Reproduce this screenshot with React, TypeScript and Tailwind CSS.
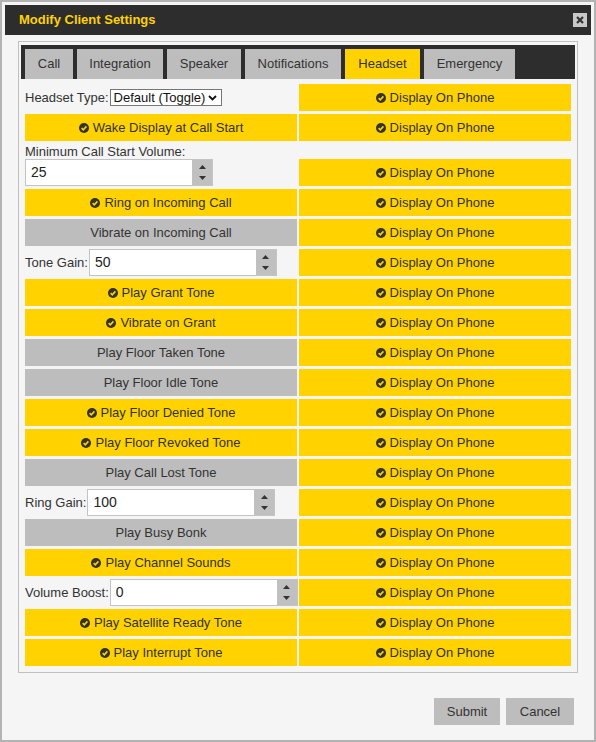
import React from "react";

const TABS = [
    { label: "Call", w: "w-[48px]" },
    { label: "Integration", w: "w-[86px]" },
    { label: "Speaker", w: "w-[74px]" },
    { label: "Notifications", w: "w-[96px]" },
    { label: "Headset", w: "w-[75px]", active: true },
    { label: "Emergency", w: "w-[91px]" },
];

type Row =
    | { kind: "toggle"; label: string; on: boolean }
    | { kind: "select"; label: string; value: string }
    | { kind: "number"; label: string; value: string }
    | { kind: "stacked"; label: string; value: string };

const ROWS: Row[] = [
    { kind: "select", label: "Headset Type:", value: "Default (Toggle)" },
    { kind: "toggle", label: "Wake Display at Call Start", on: true },
    { kind: "stacked", label: "Minimum Call Start Volume:", value: "25" },
    { kind: "toggle", label: "Ring on Incoming Call", on: true },
    { kind: "toggle", label: "Vibrate on Incoming Call", on: false },
    { kind: "number", label: "Tone Gain:", value: "50" },
    { kind: "toggle", label: "Play Grant Tone", on: true },
    { kind: "toggle", label: "Vibrate on Grant", on: true },
    { kind: "toggle", label: "Play Floor Taken Tone", on: false },
    { kind: "toggle", label: "Play Floor Idle Tone", on: false },
    { kind: "toggle", label: "Play Floor Denied Tone", on: true },
    { kind: "toggle", label: "Play Floor Revoked Tone", on: true },
    { kind: "toggle", label: "Play Call Lost Tone", on: false },
    { kind: "number", label: "Ring Gain:", value: "100" },
    { kind: "toggle", label: "Play Busy Bonk", on: false },
    { kind: "toggle", label: "Play Channel Sounds", on: true },
    { kind: "number", label: "Volume Boost:", value: "0" },
    { kind: "toggle", label: "Play Satellite Ready Tone", on: true },
    { kind: "toggle", label: "Play Interrupt Tone", on: true },
];

function CheckIcon() {
    return (
        <svg width="10" height="10" viewBox="0 0 10 10" className="shrink-0">
            <circle cx="5" cy="5" r="5" fill="#333" />
            <path d="M2.6 5.2 L4.3 6.8 L7.4 3.4" fill="none" stroke="#ffd200" strokeWidth="1.6" />
        </svg>
    );
}

function Toggle({ label, on }: { label: string; on: boolean }) {
    return (
        <div className={"h-[27px] flex items-center justify-center gap-[4px] whitespace-nowrap " + (on ? "bg-[#ffd200]" : "bg-[#bdbdbd]")}>
            {on && <CheckIcon />}
            <span>{label}</span>
        </div>
    );
}

function NumberInput({ value }: { value: string }) {
    return (
        <div className="h-[27px] w-[188px] shrink-0 flex border border-[#c4c4c4] bg-white">
            <input readOnly value={value} className="flex-1 min-w-0 pl-[5px] outline-none bg-transparent text-[#222] text-[14px]" />
            <div className="w-[20px] bg-[#c0c0c0] flex flex-col items-center justify-center gap-[7px]">
                <svg width="7" height="4" viewBox="0 0 7 4"><path d="M0 4 L3.5 0 L7 4 Z" fill="#333" /></svg>
                <svg width="7" height="4" viewBox="0 0 7 4"><path d="M0 0 L3.5 4 L7 0 Z" fill="#333" /></svg>
            </div>
        </div>
    );
}

function LeftCell({ row }: { row: Row }) {
    if (row.kind === "toggle") return <Toggle label={row.label} on={row.on} />;
    if (row.kind === "select")
        return (
            <div className="h-[27px] flex items-center whitespace-nowrap">
                <span>{row.label}</span>
                <div className="ml-[1px] h-[17px] w-[112px] shrink-0 flex items-center justify-between border border-[#767676] bg-white pl-[3px] pr-[4px] text-[#111]">
                    <span>{row.value}</span>
                    <svg width="9" height="6" viewBox="0 0 9 6"><path d="M1 1 L4.5 4.5 L8 1" fill="none" stroke="#111" strokeWidth="1.8" /></svg>
                </div>
            </div>
        );
    if (row.kind === "stacked")
        return (
            <div className="flex flex-col whitespace-nowrap">
                <span className="leading-[15px]">{row.label}</span>
                <NumberInput value={row.value} />
            </div>
        );
    return (
        <div className="h-[27px] flex items-center whitespace-nowrap">
            <span>{row.label}</span>
            <div className="ml-[1px]">
                <NumberInput value={row.value} />
            </div>
        </div>
    );
}

export default function App() {
    return (
        <div className="h-[742px] w-[596px] bg-[#b3b3b3] p-[2px] text-[13px] text-[#333]" style={{ fontFamily: '"Liberation Sans", Arial, sans-serif' }}>
            <div className="bg-[#f5f5f5] h-full flex flex-col pt-[3px]">
                {/* Title bar */}
                <div className="mx-[3px] h-[30px] bg-[#2d2d2d] flex items-center justify-between pl-[14px] pr-[4px]">
                    <h1 className="font-bold text-[#ffd200] text-[13px]">Modify Client Settings</h1>
                    <div className="w-[14px] h-[14px] bg-[#c8c8c8] flex items-center justify-center">
                        <svg width="8" height="8" viewBox="0 0 8 8"><path d="M1 1 L7 7 M7 1 L1 7" stroke="#333" strokeWidth="2.2" /></svg>
                    </div>
                </div>

                {/* Settings panel */}
                <div className="mx-[16px] mt-[6px] border border-[#c0c0c0] px-[2px] pt-[3px] pb-[6px]">
                    <div className="bg-[#2d2d2d] h-[34px] flex items-end gap-[4px] px-[4px]">
                        {TABS.map(t => (
                            <div key={t.label} className={"h-[30px] flex items-center justify-center " + t.w + " " + (t.active ? "bg-[#ffd200]" : "bg-[#bdbdbd]")}>
                                {t.label}
                            </div>
                        ))}
                    </div>

                    <div className="px-[4px] pt-[5px] flex flex-col gap-[3px]">
                        {ROWS.map(row => (
                            <div key={row.label} className="grid grid-cols-2 gap-[2px] items-end">
                                <LeftCell row={row} />
                                <Toggle label="Display On Phone" on={true} />
                            </div>
                        ))}
                    </div>
                </div>

                {/* Footer */}
                <div className="mt-[25px] flex justify-end gap-[6px] pr-[20px]">
                    <button className="h-[27px] w-[66px] bg-[#bdbdbd]">Submit</button>
                    <button className="h-[27px] w-[68px] bg-[#bdbdbd]">Cancel</button>
                </div>
            </div>
        </div>
    );
}
